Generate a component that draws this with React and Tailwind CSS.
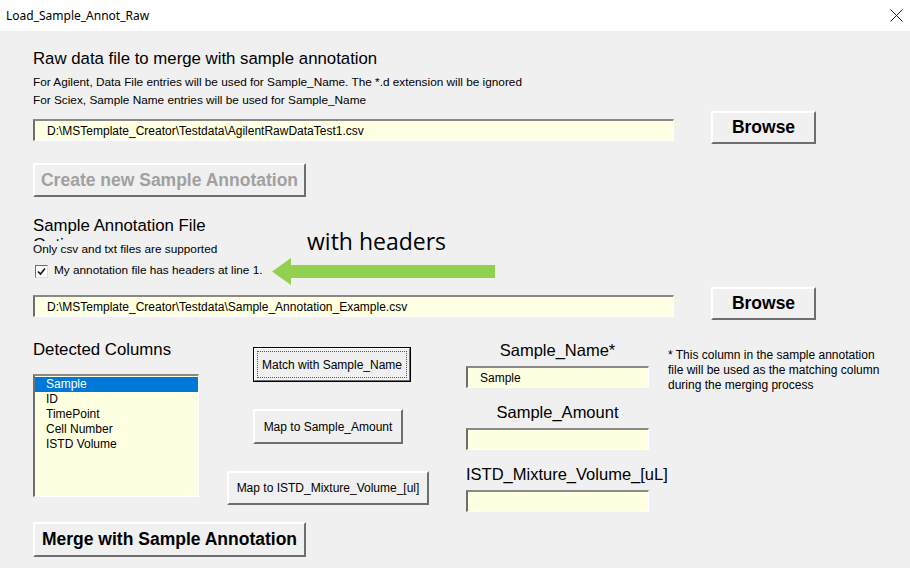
import React from 'react'

const ui = { fontFamily: '"Liberation Sans", Arial, sans-serif' }

function TextBox({ value, className = '' }) {
  return (
    <div
      className={`h-[22px] bg-[#ffffe1] border-t-2 border-l-2 border-r border-b border-t-[#8a8a8a] border-l-[#6e6e6e] border-r-white border-b-white flex items-center pl-[12px] text-[12px] text-black ${className}`}
    >
      {value}
    </div>
  )
}

function WinButton({ children, className = '', bold = false, disabled = false }) {
  return (
    <div
      className={`bg-[#f0f0f0] border-t-2 border-l-2 border-r-2 border-b-2 border-t-white border-l-white border-r-[#6e6e6e] border-b-[#6e6e6e] flex items-center justify-center whitespace-nowrap ${
        bold ? 'font-bold text-[17.5px]' : 'text-[12px]'
      } ${disabled ? 'text-[#a0a0a0]' : 'text-black'} ${className}`}
    >
      {children}
    </div>
  )
}

function Arrow() {
  return (
    <svg width="224" height="28" viewBox="0 0 224 28">
      <polygon points="0,13.5 19,0 19,7 223,7 223,20 19,20 19,27" fill="#92d050" />
    </svg>
  )
}

export default function App() {
  const columns = ['Sample', 'ID', 'TimePoint', 'Cell Number', 'ISTD Volume']

  return (
    <div className="w-[910px] h-[568px] bg-[#f0f0f0] overflow-hidden text-black" style={ui}>
      {/* title bar */}
      <div className="h-[31px] bg-white flex items-center justify-between pl-[6px] pr-[7px]">
        <span className="text-[12px] text-black" style={{ fontFamily: '"Noto Sans", "Open Sans", sans-serif' }}>
          Load_Sample_Annot_Raw
        </span>
        <svg width="13" height="13" viewBox="0 0 13 13">
          <path d="M0.5 0.5 L12.5 12.5 M12.5 0.5 L0.5 12.5" stroke="#222" strokeWidth="1" />
        </svg>
      </div>

      <div className="pl-[33px] pt-[18px]">
        <div className="h-[20px] leading-[20px] text-[16.8px]">Raw data file to merge with sample annotation</div>
        <div className="mt-[4px] text-[11.8px] leading-[18px]">
          <div>For Agilent, Data File entries will be used for Sample_Name. The *.d extension will be ignored</div>
          <div>For Sciex, Sample Name entries will be used for Sample_Name</div>
        </div>

        <div className="flex items-start mt-[2px]">
          <TextBox value="D:\MSTemplate_Creator\Testdata\AgilentRawDataTest1.csv" className="w-[641px] mt-[8px]" />
          <WinButton bold className="w-[105px] h-[33px] ml-[37px]">Browse</WinButton>
        </div>

        <WinButton bold disabled className="w-[273px] h-[34px] mt-[19px]">Create new Sample Annotation</WinButton>

        <div className="flex h-[63px] mt-[19px]">
          <div className="w-[239px]">
            <div className="h-[20px] leading-[20px] text-[16.8px]">Sample Annotation File</div>
            <div className="h-[5px] overflow-hidden text-[16.8px] leading-none pt-[1px]">Options</div>
            <div className="text-[11.8px] leading-[16px]">Only csv and txt files are supported</div>
            <div className="flex items-center mt-[6px] h-[16px]">
              <div className="w-[13px] h-[13px] ml-[2px] bg-white border border-t-[#6e6e6e] border-l-[#6e6e6e] border-r-[#dcdcdc] border-b-[#dcdcdc] flex items-center justify-center">
                <svg width="9" height="9" viewBox="0 0 9 9">
                  <path d="M1 4.5 L3.5 7 L8 1.5" stroke="#111" strokeWidth="1.6" fill="none" />
                </svg>
              </div>
              <span className="ml-[6px] text-[11.8px]">My annotation file has headers at line 1.</span>
            </div>
          </div>
          <div className="flex flex-col">
            <div
              className="ml-[35px] mt-[10px] text-[23px] leading-[30px] whitespace-nowrap"
              style={{ fontFamily: '"Open Sans", "Noto Sans", sans-serif' }}
            >
              with headers
            </div>
            <div className="mt-[2px]">
              <Arrow />
            </div>
          </div>
        </div>

        <div className="flex items-start mt-[8px]">
          <TextBox value="D:\MSTemplate_Creator\Testdata\Sample_Annotation_Example.csv" className="w-[641px] mt-[8px]" />
          <WinButton bold className="w-[105px] h-[33px] ml-[37px]">Browse</WinButton>
        </div>

        <div className="flex items-start mt-[20px]">
          {/* detected columns */}
          <div className="w-[166px]">
            <div className="h-[20px] leading-[20px] text-[16.8px]">Detected Columns</div>
            <div className="mt-[14px] h-[123px] bg-[#ffffe1] border-t-2 border-l-2 border-r border-b border-t-[#8a8a8a] border-l-[#6e6e6e] border-r-white border-b-white pt-[1px] text-[12px] leading-[15px]">
              {columns.map((c, i) => (
                <div key={c} className={`pl-[11px] ${i === 0 ? 'bg-[#0078d7] text-white' : ''}`}>
                  {c}
                </div>
              ))}
            </div>
          </div>

          {/* mapping buttons */}
          <div className="ml-[28px] w-[202px] flex flex-col">
            <div className="ml-[26px] mt-[7px] w-[158px] h-[35px] border border-black">
              <div className="w-full h-full bg-[#f0f0f0] border-t border-l border-r border-b border-t-white border-l-white border-r-[#6e6e6e] border-b-[#6e6e6e] p-[2px]">
                <div className="w-full h-full border border-dotted border-[#555] flex items-center justify-center text-[12px] whitespace-nowrap">
                  Match with Sample_Name
                </div>
              </div>
            </div>
            <WinButton className="ml-[26px] mt-[27px] w-[150px] h-[35px]">Map to Sample_Amount</WinButton>
            <WinButton className="mt-[27px] w-[202px] h-[34px]">Map to ISTD_Mixture_Volume_[ul]</WinButton>
          </div>

          {/* target fields */}
          <div className="ml-[37px] w-[183px] flex flex-col">
            <div className="h-[20px] leading-[20px] text-[16.5px] text-center">Sample_Name*</div>
            <TextBox value="Sample" className="mt-[6px]" />
            <div className="mt-[14px] h-[20px] leading-[20px] text-[16.5px] text-center">Sample_Amount</div>
            <TextBox value="" className="mt-[6px]" />
            <div className="mt-[14px] h-[20px] leading-[20px] text-[16.5px] text-center whitespace-nowrap">
              ISTD_Mixture_Volume_[uL]
            </div>
            <TextBox value="" className="mt-[6px]" />
          </div>

          <div className="ml-[19px] mt-[8px] text-[12px] leading-[15px]">
            <div>* This column in the sample annotation</div>
            <div>file will be used as the matching column</div>
            <div>during the merging process</div>
          </div>
        </div>

        <WinButton bold className="w-[273px] h-[35px] mt-[10px]">Merge with Sample Annotation</WinButton>
      </div>
    </div>
  )
}
